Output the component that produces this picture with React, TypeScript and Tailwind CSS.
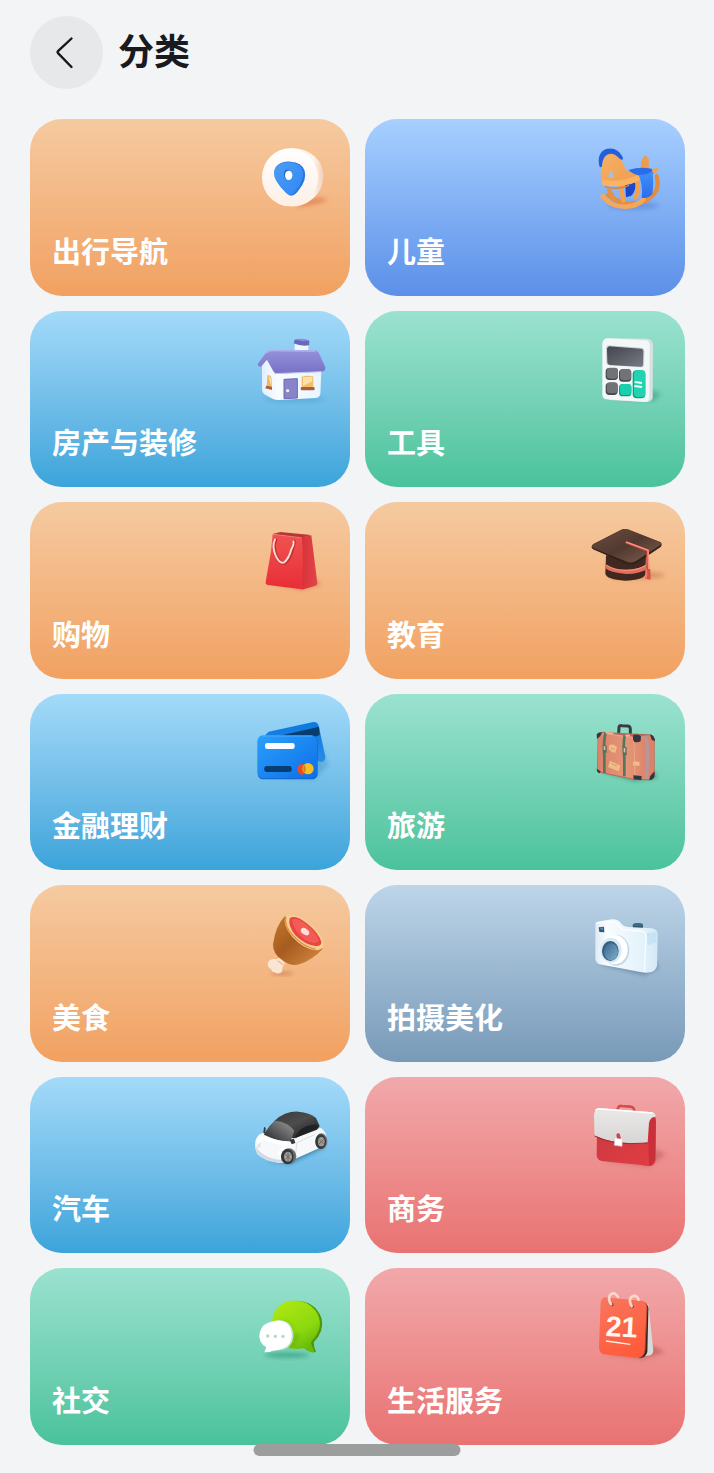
import React from "react";

type Category = {
  name: string;
  tone: string;
  icon: React.ReactNode;
};

// Shared frame for the category illustrations
function Art({ children }: { children: React.ReactNode }) {
  return (
    <svg viewBox="0 0 285 270" className="w-[95px] h-[90px] shrink-0 self-end" aria-hidden="true">
      <defs>
        <filter id="soft" x="-30%" y="-60%" width="160%" height="220%">
          <feGaussianBlur stdDeviation="6" />
        </filter>
      </defs>
      {children}
    </svg>
  );
}

function NavigationArt() {
  return (
    <Art>
      <defs>
        <linearGradient id="nav-disc" x1="0" y1="0" x2="0" y2="1">
          <stop offset="0" stopColor="#ffffff" />
          <stop offset="1" stopColor="#fdefe5" />
        </linearGradient>
        <linearGradient id="nav-side" x1="0" y1="0" x2="1" y2="0">
          <stop offset="0.7" stopColor="#fff3e9" />
          <stop offset="1" stopColor="#f1d0ba" />
        </linearGradient>
        <linearGradient id="nav-pin" x1="0" y1="0" x2="1" y2="1">
          <stop offset="0" stopColor="#4d9df0" />
          <stop offset="1" stopColor="#2f88f7" />
        </linearGradient>
      </defs>
      <g transform="translate(0 3)">
        <path d="M150 216 Q205 214 250 194 Q220 182 190 194Z" fill="#d9703f" opacity="0.6" filter="url(#soft)" />
        <path d="M135 40 Q170 38 195 54 Q235 78 235 124 Q234 176 186 203 Q165 215 135 214Z" fill="url(#nav-side)" />
        <ellipse cx="135" cy="127" rx="84" ry="87" fill="url(#nav-disc)" />
        <path d="M96 92 Q112 78 137 80 Q170 81 179 107 Q186 133 163 163 Q151 182 138 182 Q128 181 119 169 Q98 147 90 128 Q84 105 96 92Z" fill="#2877e6" />
        <path d="M92 97 Q106 81 133 82 Q168 84 173 109 Q178 132 157 160 Q145 180 135 180 Q126 178 116 166 Q96 145 89 127 Q84 109 92 97Z" fill="url(#nav-pin)" />
        <ellipse cx="127" cy="118" rx="10" ry="14" fill="#2069c5" />
        <ellipse cx="131" cy="121" rx="11" ry="14" fill="#fff" />
      </g>
    </Art>
  );
}

function KidsArt() {
  return (
    <Art>
      <defs>
        <linearGradient id="kid-wood" x1="0" y1="0" x2="1" y2="1">
          <stop offset="0" stopColor="#f5b066" />
          <stop offset="1" stopColor="#f09c4b" />
        </linearGradient>
        <linearGradient id="kid-cloth" x1="0" y1="0" x2="0" y2="1">
          <stop offset="0" stopColor="#3f92f8" />
          <stop offset="1" stopColor="#2d6bee" />
        </linearGradient>
      </defs>
      <g transform="translate(0 3)" strokeLinecap="round" strokeLinejoin="round">
        <ellipse cx="160" cy="212" rx="76" ry="12" fill="#3e66bc" opacity="0.35" filter="url(#soft)" />
        <path d="M230 124 Q244 170 196 198 Q140 222 84 180" fill="none" stroke="#e58d3e" strokeWidth="13" />
        <path d="M182 100 Q182 73 194 62 Q210 64 206 84 Q204 96 212 108Z" fill="#ef9b4d" />
        <path d="M136 150 L166 142 Q170 165 154 182 L138 187Z" fill="#1a47cf" />
        <path d="M122 154 L130 196 M172 140 Q178 168 166 186" fill="none" stroke="#f0a050" strokeWidth="14" />
        <path d="M62 118 Q62 75 84 56 Q101 47 118 66 Q132 86 138 106 L178 116 Q182 136 152 148 L78 154 Q62 148 62 118Z" fill="url(#kid-wood)" />
        <path d="M59 96 Q48 56 78 42 Q112 34 128 66 Q131 79 120 72 Q97 46 77 62 Q66 74 66 93 Q63 99 59 96Z" fill="#255eda" />
        <path d="M85 128 Q88 108 94 108 Q100 112 101 128Z" fill="#a4bfe8" />
        <path d="M74 143 Q118 152 172 130" fill="none" stroke="#f9b363" strokeWidth="17" />
        <path d="M76 155 Q110 166 146 152" fill="none" stroke="#dc8131" strokeWidth="4" />
        <path d="M86 164 L104 194" fill="none" stroke="#e89042" strokeWidth="12" />
        <path d="M68 183 Q94 218 140 215 Q174 212 190 194" fill="none" stroke="#f5a85b" strokeWidth="14" />
        <path d="M148 104 Q180 94 214 101 Q222 104 220 116 L180 122 Q160 118 148 108Z" fill="#2a6deb" />
        <path d="M176 119 Q198 122 217 109 Q222 140 217 178 Q204 192 185 188 Q189 150 176 119Z" fill="url(#kid-cloth)" />
        <path d="M222 108 L229 104" stroke="#f4a050" strokeWidth="12" />
      </g>
    </Art>
  );
}

function HouseArt() {
  return (
    <Art>
      <defs>
        <linearGradient id="house-roof" x1="0" y1="0" x2="0" y2="1">
          <stop offset="0" stopColor="#9692dc" />
          <stop offset="1" stopColor="#7770c5" />
        </linearGradient>
        <linearGradient id="house-wall" x1="0" y1="0" x2="1" y2="0">
          <stop offset="0" stopColor="#e2eeff" />
          <stop offset="0.25" stopColor="#f9fcff" />
          <stop offset="1" stopColor="#e9f5ff" />
        </linearGradient>
      </defs>
      <ellipse cx="148" cy="220" rx="90" ry="9" fill="#378bbd" opacity="0.35" filter="url(#soft)" />
      <path d="M149 54 L190 57 L190 80 L149 75Z" fill="#edf5ff" />
      <path d="M149 41 Q170 36 193 44 L192 58 Q168 62 146 52Z" fill="#6b67bb" />
      <path d="M150 40 Q171 36 192 43 Q172 49 150 40Z" fill="#918bdb" />
      <path d="M51 120 L63 98 L88 132 L229 132 L226 205 Q223 216 210 216 L102 222 Q88 223 78 216 L58 205 Q51 201 51 190Z" fill="url(#house-wall)" />
      <path d="M63 80 Q69 71 82 72 L210 73 Q217 73 222 82 L241 124 Q243 134 231 137 L97 143 Q87 142 83 132 L66 101 L49 121 Q40 125 38 114Z" fill="url(#house-roof)" />
      <path d="M64 81 Q70 73 81 74 L211 75" fill="none" stroke="#b5b6ef" strokeWidth="4" />
      <path d="M88 143 L230 137" stroke="#bec8ec" strokeWidth="3" />
      <path d="M67 148 Q78 145 80 158 L80 186 L65 183Z" fill="#f2b55d" />
      <path d="M70 151 L79 157 L78 178Z" fill="#ffe0a8" />
      <path d="M64 179 L81 182 L81 192 L61 187Z" fill="#a76042" />
      <path d="M117 160 L157 158 L157 216 L117 218Z" fill="#8984ca" stroke="#6d68ae" strokeWidth="3" />
      <circle cx="128" cy="194" r="5" fill="#f3e9d3" />
      <path d="M170 152 Q187 147 205 151 L205 185 L170 187Z" fill="#f5bd68" />
      <path d="M174 154 L202 152 L202 166 L174 180Z" fill="#ffe0a8" />
      <rect x="167" y="183" width="42" height="10" rx="4" fill="#a76042" />
    </Art>
  );
}

function ToolsArt() {
  return (
    <Art>
      <defs>
        <linearGradient id="calc-screen" x1="0" y1="0" x2="1" y2="1">
          <stop offset="0" stopColor="#42464e" />
          <stop offset="1" stopColor="#777983" />
        </linearGradient>
      </defs>
      <path d="M90 215 L224 225 L244 203 L217 192Z" fill="#278c6d" opacity="0.4" filter="url(#soft)" />
      <path d="M86 37 L203 38 Q219 41 219 58 L218 214 Q217 225 203 228 L86 222Z" fill="#d8e1e2" />
      <path d="M84 37 L196 43 Q209 44 209 58 L208 214 Q208 227 195 228 L80 220 Q68 219 67 206 L67 53 Q69 37 84 37Z" fill="#f4f7f7" />
      <path d="M85 58 L183 65 Q194 67 193 77 L192 116 Q191 125 182 124 L88 118 Q79 117 79 108 L78 66 Q79 58 85 58Z" fill="#c9cece" />
      <path d="M87 61 L183 68 Q191 69 190 78 L189 116 Q188 123 181 122 L89 117 Q82 116 82 108 L81 67Z" fill="url(#calc-screen)" />
      <rect x="77" y="126" width="37" height="36" rx="11" fill="#3c4448" />
      <rect x="80" y="125" width="34" height="33" rx="10" fill="#707278" />
      <rect x="117" y="130" width="37" height="37" rx="11" fill="#404648" />
      <rect x="120" y="129" width="33" height="34" rx="10" fill="#737278" />
      <rect x="77" y="170" width="36" height="37" rx="11" fill="#3f474b" />
      <rect x="80" y="169" width="33" height="33" rx="10" fill="#707278" />
      <rect x="117" y="174" width="37" height="37" rx="11" fill="#069b7c" />
      <rect x="120" y="174" width="34" height="33" rx="10" fill="#1acfad" />
      <rect x="158" y="133" width="38" height="84" rx="12" fill="#05a686" />
      <rect x="162" y="133" width="34" height="80" rx="11" fill="#22d2b0" />
      <path d="M164 168 L186 171 M163 180 L186 183" stroke="#e8fff8" strokeWidth="6" />
    </Art>
  );
}

function ShoppingArt() {
  return (
    <Art>
      <defs>
        <linearGradient id="bag-front" x1="0" y1="0" x2="0" y2="1">
          <stop offset="0" stopColor="#ef5350" />
          <stop offset="1" stopColor="#e82d37" />
        </linearGradient>
        <linearGradient id="bag-side" x1="0" y1="0" x2="1" y2="0">
          <stop offset="0" stopColor="#d93238" />
          <stop offset="1" stopColor="#e0454a" />
        </linearGradient>
      </defs>
      <g transform="translate(0 -6)">
        <path d="M70 205 L170 226 L229 209 L209 190Z" fill="#b75a37" opacity="0.4" filter="url(#soft)" />
        <path d="M83 57 L106 51 L198 60 L170 69Z" fill="#b9353b" />
        <path d="M169 67 L199 61 L217 205 Q217 210 211 212 L170 224Z" fill="url(#bag-side)" />
        <path d="M83 58 L170 68 Q177 130 170 223 L69 210 Q60 208 62 201 L78 109Z" fill="url(#bag-front)" />
        <path d="M84 58 L169 68" stroke="#f58072" strokeWidth="2" />
        <path d="M92 75 Q82 94 94 123 Q106 150 121 143 Q136 130 141 105 Q148 88 147 79" fill="none" stroke="#bd3034" strokeWidth="10" strokeLinecap="round" />
        <path d="M90 73 Q80 93 92 122 Q104 148 118 142 Q132 130 139 103 Q148 86 145 79" fill="none" stroke="#ffd8d1" strokeWidth="6" strokeLinecap="round" />
      </g>
    </Art>
  );
}

function EducationArt() {
  return (
    <Art>
      <defs>
        <linearGradient id="cap-top" x1="0" y1="0" x2="1" y2="1">
          <stop offset="0" stopColor="#6b4d40" />
          <stop offset="0.5" stopColor="#523930" />
          <stop offset="1" stopColor="#82614e" />
        </linearGradient>
      </defs>
      <g transform="translate(0 -4)">
        <ellipse cx="168" cy="179" rx="86" ry="12" fill="#a45c31" opacity="0.35" filter="url(#soft)" />
        <path d="M78 119 L198 119 L196 176 Q190 194 135 195 Q79 191 76 174Z" fill="#402820" />
        <path d="M76 147 Q95 163 141 162 Q182 161 201 145 L201 161 Q177 175 139 175 Q88 171 76 157Z" fill="#e26e5e" />
        <path d="M78 148 Q105 165 141 164 Q177 163 199 148" fill="none" stroke="#f58f7c" strokeWidth="4" />
        <path d="M122 44 Q130 38 144 42 L240 79 Q249 84 242 94 L169 143 Q153 151 136 143 L39 101 Q30 94 40 86Z" fill="#352019" />
        <path d="M122 43 Q130 38 144 41 L240 79 Q247 84 240 89 L168 136 Q152 145 137 137 L39 97 Q32 91 40 85Z" fill="url(#cap-top)" />
        <path d="M137 80 L202 105 L204 165" fill="none" stroke="#a73f36" strokeWidth="8" />
        <path d="M138 79 L204 104 L206 165" fill="none" stroke="#ff927d" strokeWidth="5" />
        <path d="M202 159 L211 161 L212 192 L196 189Z" fill="#db5142" />
        <path d="M201 170 L199 189" stroke="#fa806d" strokeWidth="3" />
      </g>
    </Art>
  );
}

function FinanceArt() {
  return (
    <Art>
      <defs>
        <linearGradient id="card-front" x1="0" y1="0" x2="1" y2="1">
          <stop offset="0" stopColor="#2aa0fc" />
          <stop offset="1" stopColor="#0d6ee7" />
        </linearGradient>
        <linearGradient id="card-back" x1="0" y1="0" x2="0" y2="1">
          <stop offset="0" stopColor="#0b79df" />
          <stop offset="1" stopColor="#298be7" />
        </linearGradient>
      </defs>
      <path d="M55 205 L208 212 L250 168 L216 80Z" fill="#2a7db2" opacity="0.3" filter="url(#soft)" />
      <path d="M71 68 L205 39 Q217 38 221 50 L241 143 Q242 157 227 159 L68 105 L61 78Z" fill="url(#card-back)" />
      <path d="M101 81 L222 53 L224 78 L191 90Z" fill="#073e6e" />
      <rect x="38" y="80" width="180" height="131" rx="16" fill="#1267cb" />
      <rect x="38" y="79" width="178" height="129" rx="16" fill="url(#card-front)" />
      <path d="M53 81 H201" stroke="#5cb8ff" strokeWidth="2" />
      <rect x="60" y="102" width="89" height="18" rx="7" fill="#f8fcff" />
      <rect x="58" y="171" width="82" height="18" rx="7" fill="#063d73" />
      <ellipse cx="171" cy="181" rx="14" ry="16" fill="#ee4b24" />
      <circle cx="189" cy="179" r="17" fill="#f7bd21" />
      <path d="M178 167 Q187 181 178 192 Q171 181 178 167Z" fill="#ce8424" />
    </Art>
  );
}

function TravelArt() {
  return (
    <Art>
      <defs>
        <linearGradient id="case-body" x1="0" y1="0" x2="1" y2="0">
          <stop offset="0" stopColor="#d98268" />
          <stop offset="0.5" stopColor="#e59677" />
          <stop offset="1" stopColor="#d98067" />
        </linearGradient>
      </defs>
      <path d="M58 187 L164 216 L233 206 L220 186Z" fill="#31775c" opacity="0.6" filter="url(#soft)" />
      <path d="M116 73 L117 55 Q118 49 126 50 L144 51 Q151 52 151 61 L151 77" fill="none" stroke="#393d43" strokeWidth="9" />
      <path d="M53 78 Q56 70 69 68 L109 71 L207 76 Q224 79 224 97 L224 196 Q223 211 210 214 L165 213 L65 193 Q51 190 51 174Z" fill="#b76755" />
      <path d="M53 80 Q58 72 69 73 L159 83 L206 79 Q223 82 223 98 L222 196 Q221 208 207 211 L163 210 L66 190 Q53 188 53 173Z" fill="url(#case-body)" />
      <path d="M69 73 L157 85 Q165 92 164 208" fill="none" stroke="#eda78a" strokeWidth="3" />
      <path d="M195 81 Q204 95 203 149 L200 210" fill="none" stroke="#b596a1" strokeWidth="9" />
      <path d="M77 71 Q70 96 73 143 L73 192 M134 79 Q129 104 133 147 L133 202" fill="none" stroke="#54765f" strokeWidth="8" />
      <path d="M77 71 L100 74 M136 80 L150 79" stroke="#e6ba93" strokeWidth="5" />
      <path d="M50 76 Q54 69 66 70 L61 81 L51 90Z M160 78 Q174 73 183 82 L182 97 Q172 102 162 98 Q157 91 160 78Z M210 76 Q224 79 225 97 L215 92Z M50 179 L62 187 L59 193 Q50 190 50 179Z M160 199 L185 201 L184 213 L161 211Z M223 187 L224 202 Q220 213 208 214 L210 202Z" fill="#353740" />
      <path d="M68 107 L80 110 L80 132 L69 128Z M128 112 L140 115 L140 140 L129 136Z" fill="#596c63" />
      <path d="M71 111 L76 112 L76 124 L71 122Z M131 116 L136 118 L136 131 L131 129Z" fill="#d5c1a5" />
      <path d="M88 108 Q100 104 111 114 L106 131 Q93 131 86 119Z M90 155 L121 170 L116 187 L84 174Z M161 157 L179 159 L178 171 L158 169Z" fill="#f1bc87" />
      <path d="M94 163 L111 172 M93 117 L104 121" stroke="#d59b6b" strokeWidth="3" />
    </Art>
  );
}

function FoodArt() {
  return (
    <Art>
      <defs>
        <linearGradient id="ham-skin" x1="0" y1="0" x2="1" y2="1">
          <stop offset="0" stopColor="#c47a2d" />
          <stop offset="0.45" stopColor="#a75c20" />
          <stop offset="1" stopColor="#d88c43" />
        </linearGradient>
      </defs>
      <ellipse cx="111" cy="220" rx="34" ry="5" fill="#b46436" opacity="0.6" filter="url(#soft)" />
      <path d="M104 173 L120 190 Q110 200 112 214 Q102 226 88 217 Q79 216 79 208 Q66 203 69 187 Q77 174 92 178Z" fill="#fae4d2" />
      <path d="M98 182 L114 194" stroke="#e8bd9c" strokeWidth="4" />
      <path d="M121 47 Q92 75 84 133 Q84 164 112 180 Q136 200 163 193 Q201 181 233 147Z" fill="url(#ham-skin)" />
      <path d="M121 48 Q147 33 188 65 Q232 98 236 133 Q234 151 211 151 Q173 145 142 111 Q112 76 121 48Z" fill="#f7ce8e" />
      <path d="M122 50 Q116 78 144 107 Q174 140 212 148" fill="none" stroke="#dc8f44" strokeWidth="4" />
      <path d="M134 55 Q151 41 188 72 Q222 100 229 126 Q229 140 211 138 Q179 134 151 106 Q128 77 134 55Z" fill="#e84545" />
      <path d="M141 58 Q157 50 188 77 Q215 99 222 122 Q211 137 181 121 Q143 89 141 58Z" fill="#f35c56" />
      <ellipse cx="180" cy="95" rx="14" ry="9" fill="#ffdedb" transform="rotate(35 180 95)" />
    </Art>
  );
}

function CameraArt() {
  return (
    <Art>
      <defs>
        <linearGradient id="cam-body" x1="0" y1="0" x2="1" y2="0">
          <stop offset="0" stopColor="#ddebf4" />
          <stop offset="0.18" stopColor="#f8fcff" />
          <stop offset="0.75" stopColor="#e4f2fa" />
          <stop offset="1" stopColor="#d3e9f6" />
        </linearGradient>
        <linearGradient id="cam-lens" x1="0" y1="0" x2="1" y2="1">
          <stop offset="0" stopColor="#38658b" />
          <stop offset="1" stopColor="#80b2cf" />
        </linearGradient>
      </defs>
      <path d="M53 192 L193 226 L236 205 L226 184Z" fill="#56758e" opacity="0.6" filter="url(#soft)" />
      <path d="M158 74 Q173 64 189 74 L189 90 L159 88Z" fill="#2d5a72" />
      <ellipse cx="174" cy="74" rx="15" ry="5" fill="#3f6b81" />
      <path d="M46 75 Q46 66 59 64 L97 58 Q116 58 122 69 Q129 80 144 81 L216 85 Q233 88 233 104 L231 197 Q228 212 211 217 Q197 220 181 216 L59 193 Q47 188 46 176Z" fill="url(#cam-body)" />
      <path d="M48 69 L94 64 Q107 64 113 75 Q121 89 142 90 L188 94 Q197 97 198 111 L193 215" fill="none" stroke="#fff" strokeWidth="4" opacity="0.8" />
      <path d="M201 100 L230 96 L229 127 L202 137Z" fill="#bedff2" opacity="0.7" />
      <path d="M56 82 L72 80 L73 97 L58 96Z" fill="#315c7b" />
      <path d="M58 83 L69 83 L68 91Z" fill="#648da5" />
      <ellipse cx="109" cy="151" rx="39" ry="46" fill="#c3d8e6" />
      <ellipse cx="104" cy="149" rx="39" ry="44" fill="#fff" />
      <ellipse cx="93" cy="151" rx="32" ry="38" fill="#dbe9f3" />
      <ellipse cx="91" cy="153" rx="25" ry="30" fill="#315f84" />
      <ellipse cx="93" cy="155" rx="21" ry="26" fill="url(#cam-lens)" />
    </Art>
  );
}

function CarArt() {
  return (
    <Art>
      <defs>
        <linearGradient id="car-glass" x1="0" y1="1" x2="1" y2="0">
          <stop offset="0" stopColor="#202225" />
          <stop offset="1" stopColor="#9b9d9e" />
        </linearGradient>
        <linearGradient id="car-roof" x1="0" y1="0" x2="1" y2="1">
          <stop offset="0" stopColor="#333434" />
          <stop offset="0.5" stopColor="#4d4d4d" />
          <stop offset="1" stopColor="#161718" />
        </linearGradient>
      </defs>
      <path d="M70 207 L135 215 L241 165 L219 147Z" fill="#21658d" opacity="0.65" filter="url(#soft)" />
      <path d="M56 122 Q36 126 31 148 Q28 173 38 187 Q60 208 102 213 L128 211 L225 167 L244 143 Q245 119 228 108 L160 121Z" fill="#f7f8f9" />
      <path d="M32 161 Q47 196 111 205 L108 213 Q55 208 35 181Z" fill="#d1d8df" />
      <path d="M89 86 Q121 57 160 59 Q194 61 213 78 L224 102 L216 113 L149 139 L57 128Z" fill="url(#car-roof)" />
      <path d="M57 128 Q75 94 92 86 Q126 89 148 116 L136 151 Q98 148 57 128Z" fill="url(#car-glass)" />
      <path d="M150 139 Q156 116 183 103 L214 97 L220 107 L190 121Z" fill="#202123" />
      <path d="M39 149 Q48 135 58 137 Q85 151 130 154 Q111 167 103 188" fill="none" stroke="#fff" strokeWidth="12" />
      <path d="M47 150 Q48 163 40 169 L35 162Z" fill="#dde3e8" />
      <path d="M57 104 L62 108 L61 125 L55 123Z M134 143 L147 140 L151 153 L140 157Z" fill="#36393d" />
      <path d="M156 152 L211 127 M155 152 L152 187" fill="none" stroke="#cbd4da" strokeWidth="2" />
      <ellipse cx="132" cy="193" rx="22" ry="24" fill="#6d7073" />
      <ellipse cx="127" cy="194" rx="19" ry="23" fill="#34383b" />
      <ellipse cx="129" cy="194" rx="12" ry="15" fill="#a6a099" />
      <path d="M121 186 L137 202 M137 186 L121 202 M129 180 V208" stroke="#6a6a69" strokeWidth="3" />
      <ellipse cx="229" cy="148" rx="18" ry="24" fill="#6e7175" />
      <ellipse cx="227" cy="149" rx="16" ry="22" fill="#34383b" />
      <ellipse cx="229" cy="149" rx="10" ry="14" fill="#9e9992" />
      <path d="M222 142 L236 156 M236 142 L222 156" stroke="#6a6a69" strokeWidth="3" />
    </Art>
  );
}

function BusinessArt() {
  return (
    <Art>
      <defs>
        <linearGradient id="case-red" x1="0" y1="0" x2="1" y2="1">
          <stop offset="0" stopColor="#c93941" />
          <stop offset="1" stopColor="#e13d42" />
        </linearGradient>
        <linearGradient id="case-flap" x1="0" y1="0" x2="0" y2="1">
          <stop offset="0" stopColor="#ebe8e8" />
          <stop offset="1" stopColor="#d8d5d5" />
        </linearGradient>
      </defs>
      <path d="M69 207 L207 224 L258 186 L225 171Z" fill="#ad4450" opacity="0.4" filter="url(#soft)" />
      <path d="M111 58 L115 46 Q117 41 126 42 L151 44 Q159 44 162 52 L165 61" fill="none" stroke="#d74a50" strokeWidth="8" />
      <path d="M51 111 L203 125 L204 71 L221 69 Q229 75 228 91 L227 203 Q225 220 209 222 Q194 222 184 219 L64 207 Q51 204 50 190Z" fill="url(#case-red)" />
      <path d="M203 74 Q225 68 227 91 L225 204 Q220 220 207 221Z" fill="#c9303a" />
      <path d="M46 55 Q49 48 60 48 L218 61 Q228 64 226 74 Q210 75 207 93 L203 151 Q187 157 153 154 L111 151 Q75 145 45 131 Q42 126 43 113 L42 66Z" fill="url(#case-flap)" />
      <path d="M47 55 Q52 50 62 51 L218 63" fill="none" stroke="#fff" strokeWidth="5" />
      <path d="M44 132 Q88 154 153 155 L202 153" fill="none" stroke="#972b34" strokeWidth="3" />
      <path d="M104 137 L127 139 L126 163 L103 160Z" fill="#fff" stroke="#d0c7c7" strokeWidth="2" />
      <path d="M111 139 L109 128 Q112 121 119 125 L123 140Z" fill="#c9444b" />
    </Art>
  );
}

function SocialArt() {
  return (
    <Art>
      <defs>
        <linearGradient id="chat-green" x1="0" y1="0" x2="0.6" y2="1">
          <stop offset="0" stopColor="#b3ea10" />
          <stop offset="0.7" stopColor="#8cd810" />
          <stop offset="1" stopColor="#66bb0a" />
        </linearGradient>
      </defs>
      <ellipse cx="126" cy="216" rx="66" ry="7" fill="#167963" opacity="0.5" filter="url(#soft)" />
      <path d="M151 53 Q211 53 230 107 Q238 145 206 178 Q206 192 213 207 L195 206Z" fill="#4c9608" />
      <path d="M82 108 Q88 68 124 56 Q179 43 212 83 Q239 123 209 164 Q199 174 198 180 L209 209 Q187 208 177 196 Q125 205 99 174 Q77 147 82 108Z" fill="url(#chat-green)" />
      <path d="M103 112 Q144 116 147 156 Q148 184 124 192 L158 192 L145 184 L164 160Z" fill="#398a0a" opacity="0.4" filter="url(#soft)" />
      <path d="M99 112 Q141 110 145 155 Q145 196 104 201 L72 207Z" fill="#c6e5c9" />
      <path d="M91 113 Q135 109 140 153 Q141 196 95 201 Q80 201 73 207 L58 208 L64 193 Q38 177 44 149 Q51 118 91 113Z" fill="#fff" />
      <g fill="#b9d5bc">
        <circle cx="68" cy="159" r="5" />
        <circle cx="91" cy="160" r="5" />
        <circle cx="114" cy="160" r="5" />
      </g>
    </Art>
  );
}

function LifeArt() {
  return (
    <Art>
      <defs>
        <linearGradient id="cal-page" x1="0" y1="0" x2="0.4" y2="1">
          <stop offset="0" stopColor="#f8775e" />
          <stop offset="1" stopColor="#ff5c3c" />
        </linearGradient>
      </defs>
      <path d="M70 211 L187 229 L254 207 L216 187Z" fill="#a64d4c" opacity="0.5" filter="url(#soft)" />
      <path d="M186 61 L205 64 L220 203 Q219 216 203 218 L177 220Z" fill="#d8dad8" />
      <path d="M180 59 L198 62 Q207 68 205 84 L202 207 Q198 223 180 226Z" fill="#33231f" />
      <path d="M75 43 L189 54 Q203 57 201 76 L195 201 Q193 222 177 225 L71 214 Q57 210 57 193 L62 58 Q65 44 75 43Z" fill="url(#cal-page)" />
      <path d="M197 61 Q202 66 201 76 L195 202 Q193 219 177 224" fill="none" stroke="#b8422e" strokeWidth="3" />
      <ellipse cx="95" cy="65" rx="6" ry="5" fill="#893c35" />
      <ellipse cx="156" cy="71" rx="6" ry="5" fill="#893c35" />
      <path d="M93 64 Q82 46 92 34 Q105 25 114 42 M155 70 Q145 52 154 42 Q169 32 176 50" fill="none" stroke="#fbd6c9" strokeWidth="8" strokeLinecap="round" />
      <text x="77" y="161" fontSize="86" fontWeight="700" fill="#fff8f0" transform="rotate(3 120 130)" className="font-['Liberation_Sans',sans-serif]">
        21
      </text>
      <path d="M78 174 L151 184" stroke="#fff4eb" strokeWidth="4" />
    </Art>
  );
}

const orange = "from-[#f5caa0] to-[#f1a161]";
const indigo = "from-[#a7cfff] to-[#5c90e8]";
const sky = "from-[#a3daf9] to-[#3aa4da]";
const green = "from-[#9ae2d0] to-[#49c29c]";
const slate = "from-[#bdd5e9] to-[#789ab8]";
const red = "from-[#f1a8aa] to-[#e97272]";

const categories: Category[] = [
  { name: "出行导航", tone: orange, icon: <NavigationArt /> },
  { name: "儿童", tone: indigo, icon: <KidsArt /> },
  { name: "房产与装修", tone: sky, icon: <HouseArt /> },
  { name: "工具", tone: green, icon: <ToolsArt /> },
  { name: "购物", tone: orange, icon: <ShoppingArt /> },
  { name: "教育", tone: orange, icon: <EducationArt /> },
  { name: "金融理财", tone: sky, icon: <FinanceArt /> },
  { name: "旅游", tone: green, icon: <TravelArt /> },
  { name: "美食", tone: orange, icon: <FoodArt /> },
  { name: "拍摄美化", tone: slate, icon: <CameraArt /> },
  { name: "汽车", tone: sky, icon: <CarArt /> },
  { name: "商务", tone: red, icon: <BusinessArt /> },
  { name: "社交", tone: green, icon: <SocialArt /> },
  { name: "生活服务", tone: red, icon: <LifeArt /> },
];

export default function App() {
  return (
    <div className="min-h-screen bg-[#f2f4f6] pl-[30px] pr-[29px] pt-4 pb-7 font-['Noto_Sans_CJK_SC',sans-serif]">
      <header className="flex items-center gap-[15px] mb-[30px]">
        <button
          type="button"
          aria-label="返回"
          className="w-[73px] h-[73px] shrink-0 rounded-full bg-[#e7e8ea] flex items-center justify-center cursor-pointer"
        >
          <svg viewBox="0 0 73 73" className="w-full h-full" fill="none" stroke="#17181b" strokeWidth="2.4" strokeLinecap="round" strokeLinejoin="round" aria-hidden="true">
            <path d="M41.5 22.5 L28 35.2 Q27 36.2 28 37.2 L41.5 51" />
          </svg>
        </button>
        <h1 className="text-[36px] leading-[48px] pb-2 font-bold text-[#191a1e]">分类</h1>
      </header>

      <main className="grid grid-cols-2 gap-[15px]">
        {categories.map((item) => (
          <a
            key={item.name}
            href="#"
            className={`flex flex-col justify-between aspect-[29/16] rounded-[32px] bg-gradient-to-b pt-[15px] pr-2.5 pb-7 pl-[22px] ${item.tone}`}
          >
            {item.icon}
            <span className="text-[29px] leading-[36px] font-bold text-white">{item.name}</span>
          </a>
        ))}
      </main>

      {/* Home indicator floats above the list */}
      <div className="fixed bottom-[17px] left-1/2 -translate-x-1/2 w-[207px] h-3 rounded-md bg-[#9c9e9d]" />
    </div>
  );
}
